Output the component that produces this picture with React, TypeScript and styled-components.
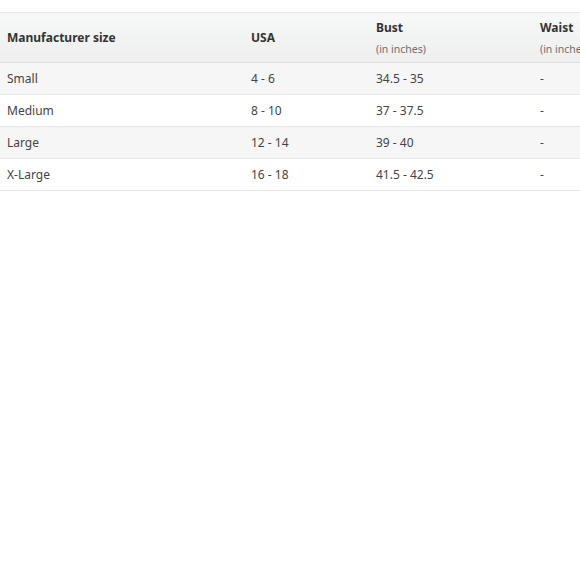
import styled, { createGlobalStyle } from 'styled-components';

const GlobalStyle = createGlobalStyle`
  html, body {
    margin: 0;
    padding: 0;
    background: #fff;
  }
  body {
    font-family: "Noto Sans", "Open Sans", Arial, sans-serif;
    color: #0f1111;
    overflow: hidden;
  }
`;

const Page = styled.div`
  padding-top: 12px;
  width: 580px;
  overflow: hidden;
`;

const Table = styled.table`
  border-collapse: collapse;
  table-layout: fixed;
  width: 700px;
  font-size: 12px;
  border-top: 1px solid #e7e7e7;
`;

const HeadRow = styled.tr`
  background: linear-gradient(to bottom, #f7f8f8, #eeeeee);
  height: 50px;
`;

// widths are content widths, 7px padding each side comes on top
const HeadCell = styled.th<{ w: number }>`
  width: ${({ w }) => w}px;
  text-align: left;
  vertical-align: middle;
  padding: 0 7px;
  font-weight: 700;
  color: #333;
  border-bottom: 1px solid #e0e0e0;
  white-space: nowrap;
`;

const Sub = styled.div`
  font-size: 10.5px;
  font-weight: 400;
  color: #6f6f6f;
  margin-top: 6px;
`;

const Row = styled.tr<{ shaded: boolean }>`
  height: 32px;
  background: ${({ shaded }) => (shaded ? '#f6f6f6' : '#ffffff')};
`;

const Cell = styled.td`
  padding: 0 7px;
  vertical-align: middle;
  color: #444;
  border-bottom: 1px solid #e7e7e7;
  white-space: nowrap;
`;

const columns = [
  { label: 'Manufacturer size', w: 230 },
  { label: 'USA', w: 111 },
  { label: 'Bust', sub: '(in inches)', w: 150 },
  { label: 'Waist', sub: '(in inches)', w: 153 },
];

const rows = [
  ['Small', '4 - 6', '34.5 - 35', '-'],
  ['Medium', '8 - 10', '37 - 37.5', '-'],
  ['Large', '12 - 14', '39 - 40', '-'],
  ['X-Large', '16 - 18', '41.5 - 42.5', '-'],
];

export default function App() {
  return (
    <>
      <GlobalStyle />
      <Page>
        <Table>
          <thead>
            <HeadRow>
              {columns.map((c) => (
                <HeadCell key={c.label} w={c.w}>
                  {c.label}
                  {c.sub && <Sub>{c.sub}</Sub>}
                </HeadCell>
              ))}
            </HeadRow>
          </thead>
          <tbody>
            {rows.map((r, i) => (
              <Row key={r[0]} shaded={i % 2 === 0}>
                {r.map((v, j) => (
                  <Cell key={j}>{v}</Cell>
                ))}
              </Row>
            ))}
          </tbody>
        </Table>
      </Page>
    </>
  );
}
